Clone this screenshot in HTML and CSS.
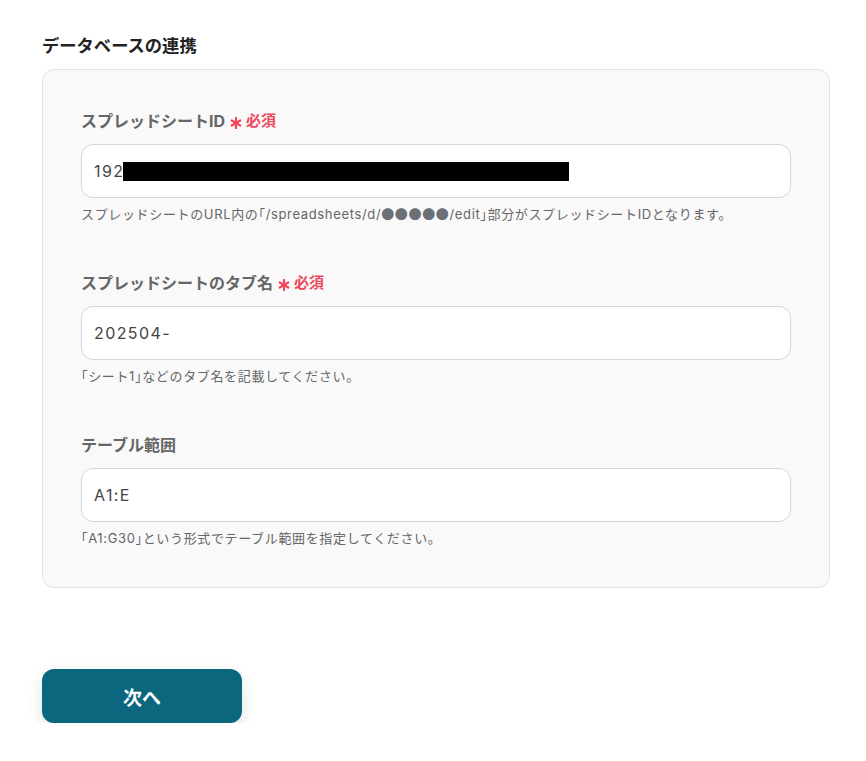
FILE: index.html
```html
<!DOCTYPE html>
<html lang="ja">
<head>
<meta charset="utf-8">
<link rel="stylesheet" href="styles.css">
</head>
<body>
<div class="page">
  <h2 class="title">データベースの連携</h2>
  <div class="panel">
    <div class="field">
      <div class="label">スプレッドシートID<span class="req"><svg class="star" viewBox="0 0 12 12" width="12" height="12"><g stroke="#f0465a" stroke-width="2.2" stroke-linecap="round"><line x1="6" y1="1" x2="6" y2="11"/><line x1="1.7" y1="3.5" x2="10.3" y2="8.5"/><line x1="1.7" y1="8.5" x2="10.3" y2="3.5"/></g></svg>必須</span></div>
      <div class="input">192<span class="redact"></span></div>
      <div class="help">スプレッドシートのURL内の｢/spreadsheets/d/<span class="cjk">●●●●●</span>/edit｣部分がスプレッドシートIDとなります。</div>
    </div>
    <div class="field">
      <div class="label">スプレッドシートのタブ名<span class="req"><svg class="star" viewBox="0 0 12 12" width="12" height="12"><g stroke="#f0465a" stroke-width="2.2" stroke-linecap="round"><line x1="6" y1="1" x2="6" y2="11"/><line x1="1.7" y1="3.5" x2="10.3" y2="8.5"/><line x1="1.7" y1="8.5" x2="10.3" y2="3.5"/></g></svg>必須</span></div>
      <div class="input">202504-</div>
      <div class="help">｢シート1｣などのタブ名を記載してください。</div>
    </div>
    <div class="field">
      <div class="label">テーブル範囲</div>
      <div class="input">A1:E</div>
      <div class="help">｢A1:G30｣という形式でテーブル範囲を指定してください。</div>
    </div>
  </div>
  <button class="next">次へ</button>
</div>
</body>
</html>
```

FILE: styles.css
```css
html, body {
  margin: 0;
  background: #ffffff;
}
body {
  font-family: "Inter", "Noto Sans CJK JP", sans-serif;
  color: #333;
}
.page {
  padding: 36px 36px 0 42px;
}
.title {
  margin: 0 0 13px 0;
  font-size: 17.3px;
  line-height: 20px;
  font-weight: 700;
  color: #222;
}
.panel {
  background: #f9f9fa;
  border: 1px solid #e1e2e6;
  border-radius: 12px;
  padding: 40px 38px 40px 38px;
  display: flex;
  flex-direction: column;
  gap: 49px;
}
.field {
  display: flex;
  flex-direction: column;
}
.label {
  display: flex;
  align-items: center;
  font-size: 16px;
  line-height: 22px;
  font-weight: 700;
  color: #666;
  margin-bottom: 12px;
}
.req {
  display: inline-flex;
  align-items: center;
  margin-left: 5px;
  color: #f0465a;
  font-size: 15px;
  font-weight: 700;
}
.star {
  margin-right: 4px;
  margin-top: 3px;
}
.input {
  height: 54px;
  box-sizing: border-box;
  background: #fff;
  border: 1px solid #d2d5dc;
  border-radius: 12px;
  padding: 0 12px;
  display: flex;
  align-items: center;
  font-size: 16px;
  color: #444;
  letter-spacing: 1.4px;
}
.redact {
  display: inline-block;
  width: 446px;
  height: 19px;
  margin-left: -1px;
  background: #000;
}
.help {
  margin-top: 7px;
  font-size: 13px;
  line-height: 18px;
  letter-spacing: 0.05em;
  color: #666;
}
.cjk {
  font-family: "Noto Sans CJK JP", sans-serif;
  color: #6b6f76;
}
.next {
  margin-top: 81px;
  width: 200px;
  height: 54px;
  border: none;
  border-radius: 12px;
  background: #0b677e;
  color: #fff;
  font-family: "Inter", "Noto Sans CJK JP", sans-serif;
  font-size: 19px;
  font-weight: 700;
  box-shadow: 0 6px 16px rgba(0, 0, 0, 0.12);
}
```
